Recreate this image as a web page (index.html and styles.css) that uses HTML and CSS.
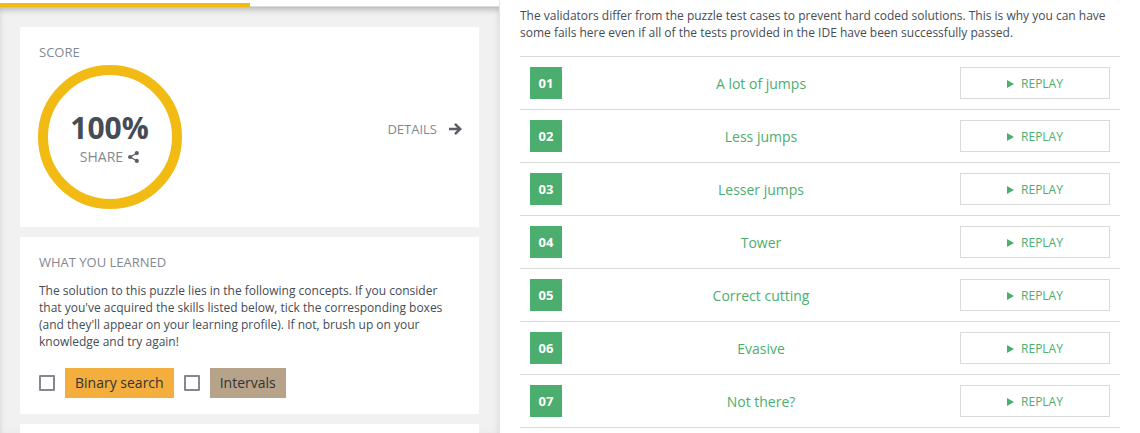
FILE: index.html
```html
<!DOCTYPE html>
<html lang="en">
<head>
<meta charset="utf-8">
<title>Puzzle results</title>
<link rel="stylesheet" href="styles.css">
</head>
<body>
<div class="layout">
  <section class="side">
    <div class="tabs"><div class="tab-active"></div></div>
    <div class="side-content">
      <article class="card score-card">
        <h2 class="card-title">SCORE</h2>
        <div class="score-row">
          <div class="ring">
            <div class="score-value">100%</div>
            <div class="share"><span>SHARE</span>
              <svg class="share-icon" viewBox="0 0 11 12"><path d="M9 2 2.2 6 9 10" fill="none" stroke="currentColor" stroke-width="1.2"/><circle cx="8.8" cy="2.1" r="2.1"/><circle cx="2.1" cy="6" r="2.1"/><circle cx="8.8" cy="9.9" r="2.1"/></svg>
            </div>
          </div>
          <div class="details"><span>DETAILS</span>
            <svg class="arrow-icon" viewBox="0 0 13 12"><path d="M0 6h11M6 .9 11.2 6 6 11.1" fill="none" stroke="currentColor" stroke-width="2.5"/></svg>
          </div>
        </div>
      </article>
      <article class="card learned-card">
        <h2 class="card-title">WHAT YOU LEARNED</h2>
        <p class="copy">The solution to this puzzle lies in the following concepts. If you consider<br>that you've acquired the skills listed below, tick the corresponding boxes<br>(and they'll appear on your learning profile). If not, brush up on your<br>knowledge and try again!</p>
        <div class="skills">
          <span class="checkbox"></span><span class="skill skill-search">Binary search</span>
          <span class="checkbox"></span><span class="skill skill-intervals">Intervals</span>
        </div>
      </article>
      <article class="card next-card"></article>
    </div>
  </section>
  <section class="main">
    <p class="copy intro">The validators differ from the puzzle test cases to prevent hard coded solutions. This is why you can have<br>some fails here even if all of the tests provided in the IDE have been successfully passed.</p>
    <div class="validators">
      <div class="row"><span class="num">01</span><span class="name">A lot of jumps</span><span class="replay"><svg class="play" viewBox="0 0 7 8"><path d="M0 0 7 4 0 8z"/></svg><span>REPLAY</span></span></div>
      <div class="row"><span class="num">02</span><span class="name">Less jumps</span><span class="replay"><svg class="play" viewBox="0 0 7 8"><path d="M0 0 7 4 0 8z"/></svg><span>REPLAY</span></span></div>
      <div class="row"><span class="num">03</span><span class="name">Lesser jumps</span><span class="replay"><svg class="play" viewBox="0 0 7 8"><path d="M0 0 7 4 0 8z"/></svg><span>REPLAY</span></span></div>
      <div class="row"><span class="num">04</span><span class="name">Tower</span><span class="replay"><svg class="play" viewBox="0 0 7 8"><path d="M0 0 7 4 0 8z"/></svg><span>REPLAY</span></span></div>
      <div class="row"><span class="num">05</span><span class="name">Correct cutting</span><span class="replay"><svg class="play" viewBox="0 0 7 8"><path d="M0 0 7 4 0 8z"/></svg><span>REPLAY</span></span></div>
      <div class="row"><span class="num">06</span><span class="name">Evasive</span><span class="replay"><svg class="play" viewBox="0 0 7 8"><path d="M0 0 7 4 0 8z"/></svg><span>REPLAY</span></span></div>
      <div class="row"><span class="num">07</span><span class="name">Not there?</span><span class="replay"><svg class="play" viewBox="0 0 7 8"><path d="M0 0 7 4 0 8z"/></svg><span>REPLAY</span></span></div>
    </div>
  </section>
</div>
</body>
</html>
```
FILE: styles.css
```css
* { box-sizing: border-box; }
body { margin: 0; font-family: "Open Sans", sans-serif; color: #454c55; background: #fff; }
svg { display: block; fill: currentColor; flex: none; }
.layout { display: flex; height: 433px; overflow: hidden; }
.side { width: 500px; flex: none; display: flex; flex-direction: column; border-right: 1px solid #e4e4e4; }
.tabs { height: 7px; flex: none; padding-top: 3px; background: linear-gradient(#fff 6px, #dadcdc 6px); }
.tab-active { width: 250px; height: 4px; background: #f2bb13; }
.side-content {
  flex: 1; min-height: 0; overflow: hidden; padding: 20px 20px 0 20px;
  display: flex; flex-direction: column; gap: 10px;
  background: #f1f1f1; box-shadow: inset 0 0 10px rgba(0,0,0,.04), inset 0 5px 7px -3px rgba(0,0,0,.26);
}
.card { background: #fff; flex: none; padding: 17px 19px 0; }
.score-card { height: 200px; }
.learned-card { height: 177px; }
.next-card { height: 60px; }
.card-title { margin: 0; font-size: 13px; line-height: 17px; font-weight: 400; color: #838891; }
.score-row { display: flex; justify-content: space-between; margin: 3.5px -2px 0 -1.5px; }
.ring { width: 144px; height: 144px; border: 10px solid #f2bb13; border-radius: 50%; display: flex; flex-direction: column; align-items: center; padding-top: 33px; }
.score-value { font-size: 30px; line-height: 39px; font-weight: 700; }
.share { display: flex; align-items: center; gap: 5px; font-size: 14px; line-height: 20px; font-weight: 500; color: #838891; }
.share-icon { width: 11px; height: 12px; color: #5b5f65; }
.details { display: flex; align-items: center; gap: 12px; height: 20px; margin: 54.5px 0 0; font-size: 13px; color: #838891; }
.arrow-icon { width: 13px; height: 12px; color: #5b5e63; }
.copy { margin: 0; font-size: 12px; line-height: 17px; white-space: nowrap; }
.learned-card .copy { margin-top: 11px; }
.skills { display: flex; align-items: center; gap: 10px; margin-top: 18px; }
.checkbox { width: 16px; height: 16px; border: 2px solid #838891; border-radius: 1px; }
.skill { height: 30px; line-height: 30px; padding: 0 10px; font-size: 14px; color: #333; white-space: nowrap; }
.skill-search { background: #f4ae3d; }
.skill-intervals { background: #b7a28a; }
.main { width: 600px; margin-left: 20px; padding-top: 7px; flex: none; }
.validators { margin-top: 15px; border-top: 1px solid #dadada; }
.row { display: grid; grid-template-columns: 32px 1fr 150px; align-items: center; height: 53px; padding: 0 10px; border-bottom: 1px solid #dadada; color: #4cae6e; }
.num { height: 32px; line-height: 32px; text-align: center; background: #4cae6e; color: #fff; font-size: 13px; font-weight: 700; }
.name { text-align: center; font-size: 14px; line-height: 20px; padding-top: 2px; }
.replay { height: 32px; border: 1px solid #dadada; display: flex; align-items: center; justify-content: center; gap: 7px; font-size: 12px; }
.play { width: 7px; height: 8px; margin-top: 1px; }
```
